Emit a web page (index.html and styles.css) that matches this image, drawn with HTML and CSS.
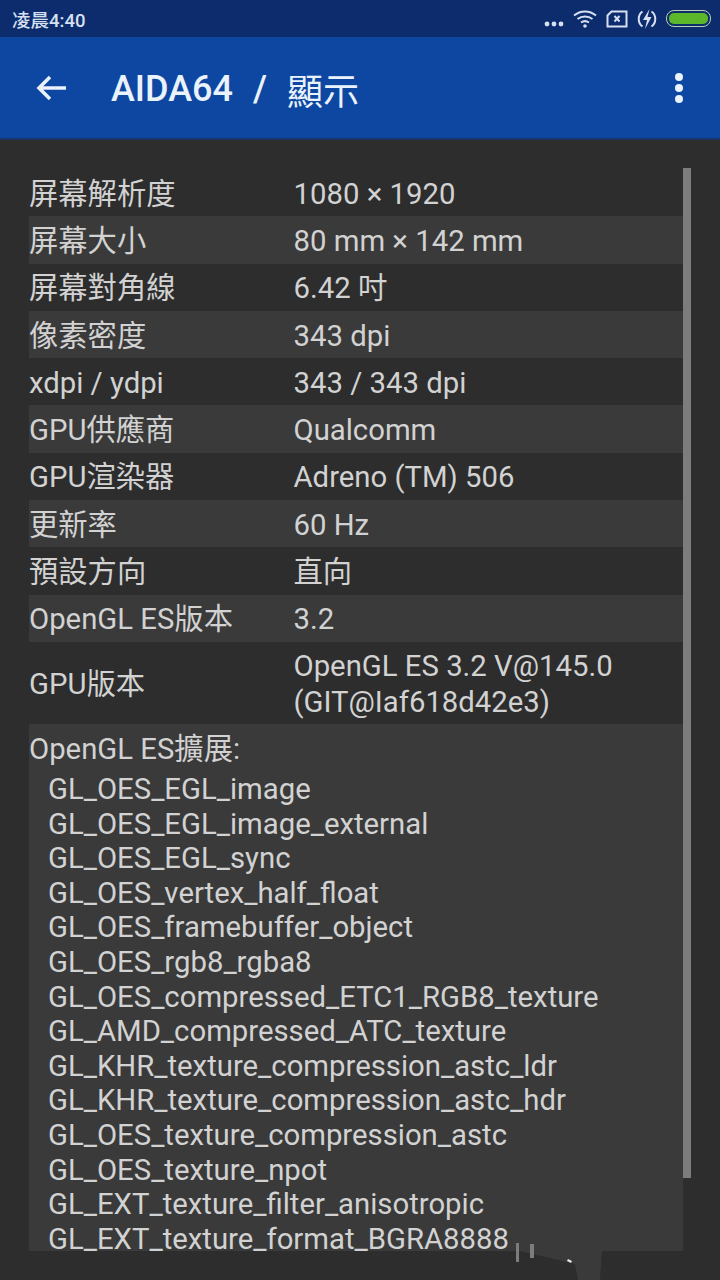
FILE: index.html
```html
<!DOCTYPE html>
<html>

<head>
<meta charset="utf-8">
<title>AIDA64</title>
<link rel="stylesheet" href="styles.css">
</head>

<body>

<div class="status">
<div class="time">凌晨4:40</div>
<div class="status-icons">
<svg class="dots" width="20" height="6" viewBox="0 0 20 6"><circle cx="3" cy="3" r="2.4"/><circle cx="10" cy="3" r="2.4"/><circle cx="17" cy="3" r="2.4"/></svg>
<svg class="wifi" width="24" height="20" viewBox="0 0 24 20"><path d="M1 6.5C7.500 1 16.500 1 23 6.500M4.500 10C9 6.500 15 6.500 19.500 10M8 13.500C10.500 11.800 13.500 11.800 16 13.500"/><circle cx="12" cy="17" r="1.800"/></svg>
<svg class="sim" width="22" height="18" viewBox="0 0 22 18"><path d="M5.500 1.500H20.500V16.500H1.500V5.500Z"/><path d="M8.500 6L13.500 11.500M13.500 6L8.500 11.500"/></svg>
<svg class="charge" width="20" height="22" viewBox="0 0 20 22"><path d="M5.500 3.500C0.500 7 0.500 15 5.500 18.500M14.500 3.500C19.500 7 19.500 15 14.500 18.500"/><path class="bolt" d="M12.500 1L6 12H10L8 21L14.500 9H10.500Z"/></svg>
<div class="battery"><div class="battery-fill"></div></div>
</div>
</div>

<div class="toolbar">
<svg class="back" width="32" height="28" viewBox="0 0 32 28"><path d="M30 14H3M14 3L3 14L14 25"/></svg>
<div class="title"><span class="app">AIDA64</span><span class="slash">/</span><span class="page">顯示</span></div>
<div class="menu"><span></span><span></span><span></span></div>
</div>

<div class="content">
<div class="scrollbar"></div>
<div class="list">

<div class="row"><div class="label">屏幕解析度</div><div class="value">1080 × 1920</div></div>
<div class="row"><div class="label">屏幕大小</div><div class="value">80 mm × 142 mm</div></div>
<div class="row"><div class="label">屏幕對角線</div><div class="value">6.42 吋</div></div>
<div class="row"><div class="label">像素密度</div><div class="value">343 dpi</div></div>
<div class="row"><div class="label">xdpi / ydpi</div><div class="value">343 / 343 dpi</div></div>
<div class="row"><div class="label">GPU供應商</div><div class="value">Qualcomm</div></div>
<div class="row"><div class="label">GPU渲染器</div><div class="value">Adreno (TM) 506</div></div>
<div class="row"><div class="label">更新率</div><div class="value">60 Hz</div></div>
<div class="row"><div class="label">預設方向</div><div class="value">直向</div></div>
<div class="row"><div class="label">OpenGL ES版本</div><div class="value">3.2</div></div>
<div class="row tall"><div class="label">GPU版本</div><div class="value">OpenGL ES 3.2 V@145.0<br>(GIT@Iaf618d42e3)</div></div>

<div class="extensions">
<div class="ext-title">OpenGL ES擴展:</div>
<div class="ext-list">
<div>GL_OES_EGL_image</div>
<div>GL_OES_EGL_image_external</div>
<div>GL_OES_EGL_sync</div>
<div>GL_OES_vertex_half_float</div>
<div>GL_OES_framebuffer_object</div>
<div>GL_OES_rgb8_rgba8</div>
<div>GL_OES_compressed_ETC1_RGB8_texture</div>
<div>GL_AMD_compressed_ATC_texture</div>
<div>GL_KHR_texture_compression_astc_ldr</div>
<div>GL_KHR_texture_compression_astc_hdr</div>
<div>GL_OES_texture_compression_astc</div>
<div>GL_OES_texture_npot</div>
<div>GL_EXT_texture_filter_anisotropic</div>
<div>GL_EXT_texture_format_BGRA8888</div>
</div>
</div>

</div>
</div>

<!-- smudge over the bottom edge of the panel -->
<svg class="smudge" width="720" height="40" viewBox="0 0 720 40">
<path class="smudge-panel" d="M516 10L575 24L578 40H600L602 10Z"/>
<rect class="smudge-bar" x="516" y="3" width="3" height="19"/>
<rect class="smudge-bar" x="530" y="4" width="4" height="14"/>
<path class="smudge-speck" d="M568 19L572 21L571 23L567 21Z"/>
</svg>

</body>
</html>
```

FILE: styles.css
```css
html, body {
    margin: 0;
    height: 1280px;
    overflow: hidden;
}

body {
    font-family: Roboto, "Noto Sans CJK TC", sans-serif;
    background: #2d2d2d;
    color: #d2d2d2;
}

.status {
    height: 37px;
    box-sizing: border-box;
    padding: 0 9px 0 12px;
    display: flex;
    align-items: center;
    justify-content: space-between;
    background: #0c2c6e;
}

.time {
    font-size: 18.500px;
    font-weight: 500;
    color: #d6e0f0;
}

.status-icons {
    display: flex;
    align-items: center;
    gap: 9px;
}

.status-icons svg {
    fill: none;
    stroke: #d6e0f0;
    stroke-width: 2;
}

.dots {
    margin-top: 10px;
}

.status-icons .dots {
    fill: #d6e0f0;
    stroke: none;
}

.status-icons .wifi circle {
    fill: #d6e0f0;
    stroke: none;
}

.status-icons .charge .bolt {
    fill: #d6e0f0;
    stroke: none;
}

.battery {
    width: 45px;
    height: 17px;
    box-sizing: border-box;
    padding: 2px;
    border: 1.500px solid #b8d0b0;
    border-radius: 8px;
}

.battery-fill {
    height: 100%;
    border-radius: 5px;
    background: #5cb82a;
}

.toolbar {
    height: 103px;
    box-sizing: border-box;
    display: flex;
    align-items: center;
    padding: 0 36px;
    background: #0d47a1;
    border-bottom: 2px solid #1a3468;
}

.back {
    fill: none;
    stroke: #eaf2fb;
    stroke-width: 3.500;
    margin-right: 43px;
    flex: none;
}

.title {
    display: flex;
    align-items: center;
    flex: 1;
    padding-top: 3px;
    font-size: 36px;
    font-weight: 500;
    color: #eaf2fb;
}

.slash {
    margin: 0 20px;
}

.page {
    font-weight: 400;
}

.menu {
    display: flex;
    flex-direction: column;
    gap: 3px;
    margin-right: 1px;
}

.menu span {
    width: 8px;
    height: 8px;
    border-radius: 50%;
    background: #eaf2fb;
}

.content {
    position: relative;
    padding: 29px 37px 0 29px;
}

.scrollbar {
    position: absolute;
    top: 28px;
    right: 29px;
    width: 8px;
    height: 1010px;
    background: #7c7c7c;
}

.list {
    font-size: 29.300px;
}

.row {
    display: flex;
    align-items: center;
    box-sizing: border-box;
    height: 47.300px;
    padding-top: 2px;
    line-height: 36px;
}

.row:nth-child(even) {
    background: #3a3a3a;
}

.row.tall {
    height: 82px;
}

.label {
    width: 264.500px;
    flex: none;
}

.extensions {
    height: 527px;
    background: #3a3a3a;
}

.ext-title {
    line-height: 36px;
    padding-top: 7px;
}

.ext-list {
    padding: 5px 0 0 19px;
    line-height: 34.600px;
}

.smudge {
    position: absolute;
    left: 0;
    top: 1240px;
}

.smudge-panel {
    fill: #3a3a3a;
}

.smudge-bar {
    fill: #7c7c7c;
}

.smudge-speck {
    fill: #e6e6e6;
}
```
